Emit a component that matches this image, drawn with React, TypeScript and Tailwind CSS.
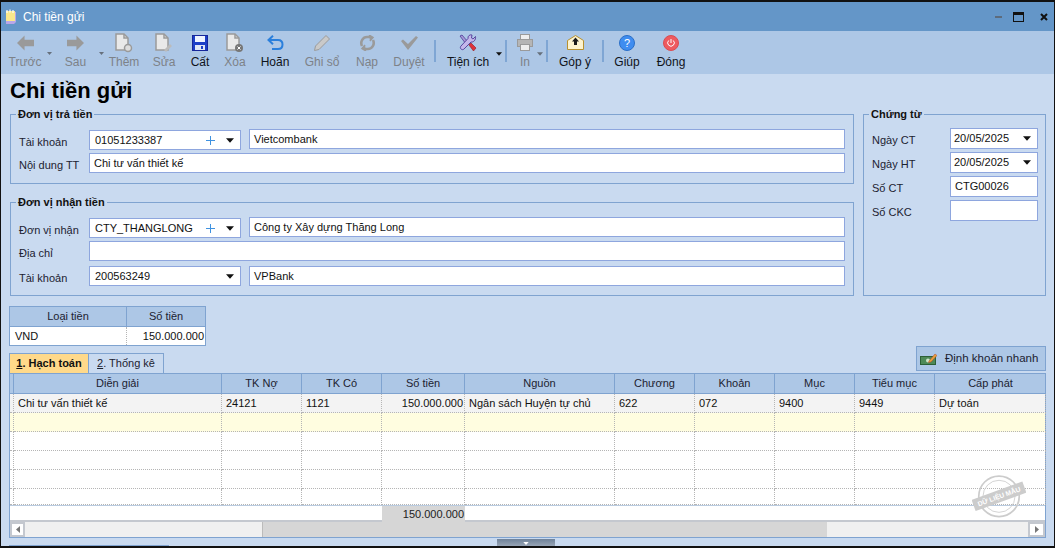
import type { ReactNode } from "react";

const FONT = "font-['Liberation_Sans',Arial,sans-serif]";
const GRID =
  "grid grid-cols-[4px_208px_80px_80px_83px_150px_80px_80px_80px_80px_111px]";

const Caret = ({ className }: { className?: string }) => (
  <svg width="9" height="5" viewBox="0 0 9 5" className={className}>
    <path d="M0 0h9L4.500 5z" fill="currentColor" />
  </svg>
);

function Tool({
  w,
  label,
  active,
  icon,
}: {
  w: string;
  label: string;
  active?: boolean;
  icon: ReactNode;
}) {
  return (
    <div className={`flex flex-col items-center shrink-0 ${w}`}>
      <div className="h-[23px] flex items-center justify-center">{icon}</div>
      <span
        className={`text-[12px] leading-[17px] whitespace-nowrap ${
          active ? "text-[#10131a]" : "text-[#7d8288]"
        }`}
      >
        {label}
      </span>
    </div>
  );
}

const Sep = () => <div className="w-[2px] h-[22px] mt-[9px] bg-[#7fa6d4] shrink-0" />;

const G = "#9a9a9a";

const IconBack = () => (
  <svg width="17" height="16" viewBox="0 0 18 16">
    <path d="M8 0v4.500h10v7H8V16L0 8z" fill={G} />
  </svg>
);
const IconNext = () => (
  <svg width="17" height="16" viewBox="0 0 18 16">
    <path d="M10 0v4.500H0v7h10V16l8-8z" fill={G} />
  </svg>
);
const Doc = ({ children }: { children?: ReactNode }) => (
  <svg width="18" height="20" viewBox="0 0 18 20">
    <path d="M1 1h8l4 4v12H1z" fill="#e9e9e9" stroke={G} strokeWidth="1.500" />
    <path d="M9 1v4h4" fill="none" stroke={G} strokeWidth="1.500" />
    {children}
  </svg>
);
const IconSave = () => (
  <svg width="16" height="16" viewBox="0 0 16 16">
    <rect x="0.500" y="0.500" width="15" height="15" fill="#1c3fc7" stroke="#16269a" />
    <rect x="3" y="1" width="10" height="6" fill="#eef3ff" />
    <rect x="3" y="10" width="10" height="5" fill="#dfe6f5" />
    <rect x="9" y="11" width="2" height="3" fill="#1c3fc7" />
  </svg>
);
const IconUndo = () => (
  <svg width="17" height="16" viewBox="0 0 17 16" fill="none">
    <path
      d="M2 5h9c3 0 4.500 2 4.500 4.500S14 14 11 14H5"
      stroke="#2a7fdc"
      strokeWidth="2"
    />
    <path d="M6 0.800 1.500 5 6 9.200" stroke="#2a7fdc" strokeWidth="2" />
  </svg>
);
const IconPencil = () => (
  <svg width="16" height="16" viewBox="0 0 16 16">
    <path d="M12 0.500 15.500 4 5 14.500 0.500 15.500 1.500 11z" fill="#c9c9c9" stroke={G} />
  </svg>
);
const IconReload = () => (
  <svg width="17" height="16" viewBox="0 0 17 16" fill="none" stroke={G} strokeWidth="2.600">
    <path d="M3 11C.8 6.500 4 2 8 2h3" />
    <path d="M14 5c2.200 4.500-1 9-5 9H6" />
    <path d="M10 0l4 2.500L11 6" strokeWidth="1.500" fill={G} />
    <path d="M7 16l-4-2.500L6 10" strokeWidth="1.500" fill={G} />
  </svg>
);
const IconCheck = () => (
  <svg width="17" height="14" viewBox="0 0 17 14">
    <path d="M0 5l2-1.500L7 8l8-8 2 1.500L7 14z" fill={G} />
  </svg>
);
const IconTools = () => (
  <svg width="18" height="18" viewBox="0 0 18 18">
    <path d="M1 2l2-1 6 7-2 2z" fill="#a89ad8" stroke="#4d3a96" strokeWidth="0.800" />
    <path
      d="M16.500 2.500 14 5l-1.500-1L13 1c-2-.8-4.500 1-4 3.500L2 12c-2 2 1 5 3 3l7-7c2.500.5 5-2 4.500-5.500z"
      fill="#c3b6ea"
      stroke="#4d3a96"
      strokeWidth="0.900"
    />
    <path d="M10 11l2-2 5 5-2.500 3z" fill="#e0323a" stroke="#8e1820" strokeWidth="0.600" />
  </svg>
);
const IconPrinter = () => (
  <svg width="16" height="17" viewBox="0 0 16 17">
    <rect x="3.500" y="0.500" width="9" height="5" fill="#eee" stroke={G} />
    <rect x="0.500" y="5.500" width="15" height="7" fill="#b5b5b5" stroke={G} />
    <rect x="3.500" y="10.500" width="9" height="6" fill="#eee" stroke={G} />
  </svg>
);
const IconMail = () => (
  <svg width="17" height="15" viewBox="0 0 17 15">
    <path d="M0.500 5.500 8.500 0.500l8 5v9h-16z" fill="#fdf3cf" stroke="#b8912f" />
    <path d="M8.500 2.500 12 6.500H10V10H7V6.500H5z" fill="#1a1a1a" />
  </svg>
);
const IconHelp = () => (
  <svg width="16" height="16" viewBox="0 0 16 16">
    <circle cx="8" cy="8" r="7.500" fill="#3f8df0" stroke="#2b6fc7" />
    <text
      x="8"
      y="12"
      textAnchor="middle"
      fontSize="11"
      fontFamily="Liberation Sans"
      fill="#fff"
    >
      ?
    </text>
  </svg>
);
const IconPower = () => (
  <svg width="16" height="16" viewBox="0 0 16 16" fill="none">
    <circle cx="8" cy="8" r="7.500" fill="#ee5a5f" stroke="#d94c52" />
    <path d="M5.700 5.500a3.300 3.300 0 1 0 4.600 0M8 4v4" stroke="#fff" />
  </svg>
);

const Field = ({ className, children }: { className: string; children?: ReactNode }) => (
  <div
    className={`h-[20px] bg-white border border-[#8ea6de] flex items-center px-[4px] text-[11px] text-[#111] whitespace-nowrap ${className}`}
  >
    {children}
  </div>
);

function Combo({
  value,
  plus,
  className,
}: {
  value: string;
  plus?: boolean;
  className: string;
}) {
  return (
    <div
      className={`h-[20px] bg-white border border-[#8ea6de] flex items-center pl-[5px] pr-[6px] text-[11px] text-[#111] ${className}`}
    >
      <span className="flex-1 whitespace-nowrap">{value}</span>
      {plus && (
        <svg width="9" height="9" viewBox="0 0 9 9" className="mr-[11px]">
          <path d="M4.500 0v9M0 4.500h9" stroke="#3f92e0" strokeWidth="1" />
        </svg>
      )}
      <Caret className="text-[#111] w-[8px]" />
    </div>
  );
}

const Label = ({ children, className = "w-[70px]" }: { children: string; className?: string }) => (
  <span className={`text-[11px] mt-[4px] text-[#1c2230] whitespace-nowrap shrink-0 ${className}`}>
    {children}
  </span>
);

function Group({
  title,
  className,
  children,
}: {
  title: string;
  className: string;
  children: ReactNode;
}) {
  return (
    <fieldset className={`border border-[#7fa3d0] ${className}`}>
      <legend className="-ml-[3px] px-[2px] text-[11px] leading-[13px] font-bold text-[#111]">
        {title}
      </legend>
      {children}
    </fieldset>
  );
}

const COLS: [string, string][] = [
  ["Diễn giải", "Chi tư vấn thiết kế"],
  ["TK Nợ", "24121"],
  ["TK Có", "1121"],
  ["Số tiền", "150.000.000"],
  ["Nguồn", "Ngân sách Huyện tự chủ"],
  ["Chương", "622"],
  ["Khoản", "072"],
  ["Mục", "9400"],
  ["Tiểu mục", "9449"],
  ["Cấp phát", "Dự toán"],
];

const BLANK_ROWS = [
  { h: "h-[19px]", bg: "bg-[#fffde0]" },
  { h: "h-[19px]", bg: "bg-white" },
  { h: "h-[19px]", bg: "bg-white" },
  { h: "h-[19px]", bg: "bg-white" },
  { h: "h-[16px]", bg: "bg-white" },
];

const DOTTED =
  "border-r border-b border-dotted border-r-[#b5b5b5] border-b-[#b5b5b5]";

export default function App() {
  return (
    <div
      className={`${FONT} w-[1055px] h-[548px] overflow-hidden flex flex-col bg-[#c9daf0] border border-t-2 border-b-2 border-[#111]`}
    >
      {/* title bar */}
      <div className="h-[29px] shrink-0 bg-[#6496c8] flex items-center pl-[3px] pr-[6px]">
        <svg width="14" height="15" viewBox="0 0 14 15">
          <path d="M2 3h10v10l-2 2H2z" fill="#b9a6e8" />
          <rect x="2" y="2" width="9" height="10" fill="#fbe88b" />
          <path d="M3 1v3M6 0.500v3M9 1v3" stroke="#fff" strokeWidth="1.200" />
        </svg>
        <span className="ml-[5px] text-[12px] text-white">Chi tiền gửi</span>
        <div className="ml-auto flex items-center">
          <div className="w-[7px] h-[2px] bg-[#5d6b7c]" />
          <div className="ml-[11px] w-[11px] h-[10px] border border-t-[3px] border-[#111]" />
          <svg width="8" height="8" viewBox="0 0 8 8" className="ml-[16px]">
            <path d="M1 1l6 6M7 1l-6 6" stroke="#111" strokeWidth="2" />
          </svg>
        </div>
      </div>

      {/* toolbar */}
      <div className="h-[43px] shrink-0 bg-[#adc7e6] flex">
        <Tool w="w-[48px]" label="Trước" icon={<IconBack />} />
        <Caret className="text-[#66707c] -ml-[2px] mt-[21px] shrink-0 w-[5px] h-[3px]" />
        <Tool w="w-[47px]" label="Sau" icon={<IconNext />} />
        <Caret className="text-[#66707c] -mr-[3px] mt-[21px] shrink-0 w-[5px] h-[3px]" />
        <Tool w="w-[46px]" label="Thêm" icon={<Doc><circle cx="13" cy="15" r="3.500" fill="#ddd" stroke={G} strokeWidth="1.500" /></Doc>} />
        <Tool w="w-[34px]" label="Sửa" icon={<Doc><path d="M9 17l6-6 2 2-6 6z" fill="#bbb" /></Doc>} />
        <Tool w="w-[38px]" label="Cất" active icon={<IconSave />} />
        <Tool w="w-[32px]" label="Xóa" icon={<Doc><circle cx="13" cy="15" r="4" fill="#777" /><path d="M11.500 13.500l3 3M14.500 13.500l-3 3" stroke="#fff" /></Doc>} />
        <Tool w="w-[48px]" label="Hoãn" active icon={<IconUndo />} />
        <Tool w="w-[46px]" label="Ghi sổ" icon={<IconPencil />} />
        <Tool w="w-[44px]" label="Nạp" icon={<IconReload />} />
        <Tool w="w-[40px]" label="Duyệt" icon={<IconCheck />} />
        <div className="w-[5px] shrink-0" />
        <Sep />
        <Tool w="w-[64px]" label="Tiện ích" active icon={<IconTools />} />
        <Caret className="text-[#111] mt-[21px] shrink-0 w-[6px] h-[4px] -ml-[4px]" />
        <div className="w-[3px] shrink-0" />
        <Sep />
        <Tool w="w-[36px]" label="In" icon={<IconPrinter />} />
        <Caret className="text-[#66707c] mt-[21px] shrink-0 w-[6px] h-[4px] -ml-[6px] mr-[3px]" />
        <Sep />
        <Tool w="w-[54px]" label="Góp ý" active icon={<IconMail />} />
        <Sep />
        <Tool w="w-[46px]" label="Giúp" active icon={<IconHelp />} />
        <Tool w="w-[42px]" label="Đóng" active icon={<IconPower />} />
      </div>

      {/* body */}
      <div className="flex-1 min-h-0 px-[8px] flex flex-col">
        <h1 className="mt-[3px] ml-[1px] h-[31px] text-[22px] leading-[28px] font-bold text-black">
          Chi tiền gửi
        </h1>

        <div className="flex gap-[9px] items-start">
          <div className="w-[844px] ml-[1px] shrink-0 flex flex-col">
            <Group title="Đơn vị trả tiền" className="h-[76px] px-[8px] pt-[9px]">
              <div className="flex items-center">
                <Label>Tài khoản</Label>
                <Combo value="01051233387" plus className="w-[152px] shrink-0" />
                <Field className="ml-[8px] flex-1 -mt-[2px]">Vietcombank</Field>
              </div>
              <div className="flex items-center mt-[2px]">
                <Label>Nội dung TT</Label>
                <Field className="flex-1">Chi tư vấn thiết kế</Field>
              </div>
            </Group>

            <Group title="Đơn vị nhận tiền" className="h-[100px] mt-[12px] px-[8px] pt-[9px]">
              <div className="flex items-center">
                <Label>Đơn vị nhận</Label>
                <Combo value="CTY_THANGLONG" plus className="w-[152px] shrink-0" />
                <Field className="ml-[8px] flex-1 -mt-[2px]">Công ty Xây dựng Thăng Long</Field>
              </div>
              <div className="flex items-center mt-[2px]">
                <Label>Địa chỉ</Label>
                <Field className="flex-1" />
              </div>
              <div className="flex items-center mt-[5px]">
                <Label>Tài khoản</Label>
                <Combo value="200563249" className="w-[152px] shrink-0" />
                <Field className="ml-[8px] flex-1">VPBank</Field>
              </div>
            </Group>
          </div>

          <Group title="Chứng từ" className="w-[183px] h-[188px] shrink-0 pl-[8px] pr-[7px] pt-[7px]">
            <div className="flex flex-col gap-[3px]">
              {[
                ["Ngày CT", "20/05/2025"],
                ["Ngày HT", "20/05/2025"],
              ].map(([l, v]) => (
                <div key={l} className="flex items-center">
                  <Label className="w-[78px]">{l}</Label>
                  <Combo value={v} className="flex-1 !h-[21px] !pl-[3px]" />
                </div>
              ))}
              <div className="flex items-center">
                <Label className="w-[78px]">Số CT</Label>
                <Field className="flex-1 !h-[21px]">CTG00026</Field>
              </div>
              <div className="flex items-center">
                <Label className="w-[78px]">Số CKC</Label>
                <Field className="flex-1 !h-[21px]" />
              </div>
            </div>
          </Group>
        </div>

        {/* currency */}
        <div className="mt-[10px] w-[197px] border border-[#7fa3d0] text-[11px]">
          <div className="flex h-[20px] bg-[#adc7e6] border-b border-[#7fa3d0] text-[#1c2230]">
            <div className="w-[117px] border-r border-[#7fa3d0] flex items-center justify-center">Loại tiền</div>
            <div className="flex-1 flex items-center justify-center">Số tiền</div>
          </div>
          <div className="flex h-[18px] bg-white text-[#111]">
            <div className="w-[117px] border-r border-dotted border-[#b5b5b5] flex items-center pl-[5px]">VND</div>
            <div className="flex-1 flex items-center justify-end pr-[1px]">150.000.000</div>
          </div>
        </div>

        {/* tabs + quick button */}
        <div className="flex items-end h-[27px] shrink-0">
          <div className="w-[80px] h-[20px] bg-[#ffd98a] border border-b-0 border-[#7fa3d0] flex items-center justify-center text-[11px] font-bold text-[#111]">
            <span><u>1</u>. Hạch toán</span>
          </div>
          <div className="w-[75px] h-[20px] border border-l-0 border-b-0 border-[#7fa3d0] flex items-center justify-center text-[11px] text-[#1c2230]">
            <span><u>2</u>. Thống kê</span>
          </div>
          <div className="ml-auto w-[130px] h-[25px] self-start bg-[#adc7e6] border border-[#7fa3d0] flex items-center pl-[3px] text-[11.500px] text-[#1c2230] whitespace-nowrap">
            <svg width="17" height="14" viewBox="0 0 17 12" className="mr-[8px]">
              <rect x="0.500" y="3.500" width="15" height="8" fill="#4e8a58" stroke="#2c5f36" />
              <circle cx="8" cy="7.500" r="2" fill="#cfe6c8" />
              <path d="M9 8 15 1l2 1.500-6 6.500-2.500.5z" fill="#e8a13a" stroke="#b3402c" strokeWidth="0.500" />
            </svg>
            Định khoản nhanh
          </div>
        </div>

        {/* grid */}
        <div className="w-[1037px] border border-[#7fa3d0] bg-white text-[11px] text-[#111]">
          <div className={`${GRID} h-[20px] bg-[#adc7e6] border-b border-[#7fa3d0] text-[#1c2230]`}>
            <div className="border-r border-[#7fa3d0]" />
            {COLS.map(([h]) => (
              <div key={h} className="border-r border-[#7fa3d0] last:border-r-0 flex items-center justify-center">
                {h}
              </div>
            ))}
          </div>
          <div className={`${GRID} h-[19px] bg-[#f3f3f3]`}>
            <div className={DOTTED} />
            {COLS.map(([h, v]) => (
              <div
                key={h}
                className={`${DOTTED} flex items-center px-[4px] whitespace-nowrap ${
                  h === "Số tiền" ? "justify-end pr-[1px]" : ""
                }`}
              >
                {v}
              </div>
            ))}
          </div>
          {BLANK_ROWS.map((r, i) => (
            <div key={i} className={`${GRID} ${r.h} ${r.bg}`}>
              <div className={DOTTED} />
              {COLS.map(([h]) => (
                <div key={h} className={DOTTED} />
              ))}
            </div>
          ))}
          <div className={`${GRID} relative h-[15px] border-t border-[#b9cbe0]`}>
            <div className="col-span-4" />
            <div className="bg-[#d6d6d6] flex items-center justify-end pr-[1px] text-[#222]">150.000.000</div>
            <svg width="54" height="54" viewBox="0 0 64 64" className="absolute right-[19px] -top-[35px] text-[#cccccc]">
              <circle cx="32" cy="30" r="24" fill="none" stroke="currentColor" strokeWidth="2" />
              <circle cx="32" cy="30" r="19" fill="none" stroke="currentColor" strokeWidth="1" />
              <g transform="rotate(-20 32 30)">
                <rect x="0" y="23" width="64" height="14" fill="currentColor" />
                <text x="32" y="33" textAnchor="middle" fontSize="8" fontWeight="700" fill="#fff" fontFamily="Liberation Sans">
                  DỮ LIỆU MẪU
                </text>
              </g>
            </svg>
          </div>
          <div className="h-[17px] flex bg-[#f0f0f0] border-t-2 border-[#c4c8cf] items-stretch">
            <div className="w-[15px] bg-white border-2 border-[#c4c8cf] flex items-center justify-center">
              <svg width="4" height="7" viewBox="0 0 4 7"><path d="M4 0v7L0 3.500z" fill="#777" /></svg>
            </div>
            <div className="ml-[237px] w-[565px] bg-[#d6d6d6] border-l border-[#bbb]" />
            <div className="flex-1" />
            <div className="w-[17px] bg-white border-2 border-[#c4c8cf] flex items-center justify-center">
              <svg width="4" height="7" viewBox="0 0 4 7"><path d="M0 0v7l4-3.500z" fill="#777" /></svg>
            </div>
          </div>
        </div>

        {/* splitter */}
        <div className="mt-[1px] flex-1 relative">
          <div className="absolute left-[488px] top-0 w-[58px] h-[8px] bg-gradient-to-b from-[#6f8299] to-[#9eabbb] flex items-center justify-center">
            <Caret className="text-white w-[6px] h-[3px]" />
          </div>
          <div className="absolute -left-[0px] bottom-0 w-[160px] h-[1px] bg-[#7fa3d0]" />
        </div>
      </div>
    </div>
  );
}
